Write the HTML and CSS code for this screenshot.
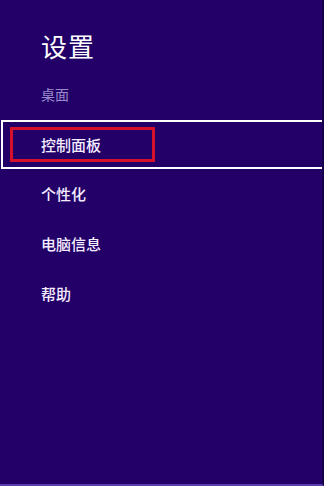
FILE: index.html
```html
<!DOCTYPE html>
<html lang="zh-CN">
<head>
<meta charset="utf-8">
<link rel="stylesheet" href="styles.css">
</head>
<body>
<div class="pane">
  <h1 class="title">设置</h1>
  <div class="context">桌面</div>
  <ul class="menu">
    <li class="item selected"><span class="mark"><span class="label">控制面板</span></span></li>
    <li class="item"><span class="label">个性化</span></li>
    <li class="item"><span class="label">电脑信息</span></li>
    <li class="item"><span class="label">帮助</span></li>
  </ul>
</div>
</body>
</html>
```
FILE: styles.css
```css
html, body {
  margin: 0;
  padding: 0;
  background: #220068;
}
.pane {
  width: 322px;
  height: 484px;
  background: #220068;
  border-right: 2px solid #16004a;
  border-bottom: 2px solid #5a3fb0;
  font-family: "Noto Sans CJK SC", "Microsoft YaHei", sans-serif;
  color: #ffffff;
  display: flex;
  flex-direction: column;
}
.title {
  margin: 28px 0 0 41px;
  font-size: 26px;
  font-weight: 400;
  line-height: 36px;
  letter-spacing: 1px;
}
.context {
  margin: 20px 0 0 41px;
  font-size: 14px;
  line-height: 20px;
  color: #9a8ccc;
}
.menu {
  list-style: none;
  margin: 16px 0 0 0;
  padding: 0;
  display: flex;
  flex-direction: column;
}
.item {
  height: 50px;
  display: flex;
  align-items: center;
  padding-left: 41px;
  font-size: 15px;
  font-weight: 500;
  line-height: 20px;
  box-sizing: border-box;
}
.label {
  color: #f4ecff;
}
.item.selected {
  height: 49px;
  margin-left: 1px;
  padding-left: 7px;
  border: 2px solid #ffffff;
  border-right: none;
}
.mark {
  display: flex;
  align-items: center;
  width: 145px;
  height: 35px;
  box-sizing: border-box;
  padding-left: 28px;
  border: 3px solid #d4102a;
}
```
